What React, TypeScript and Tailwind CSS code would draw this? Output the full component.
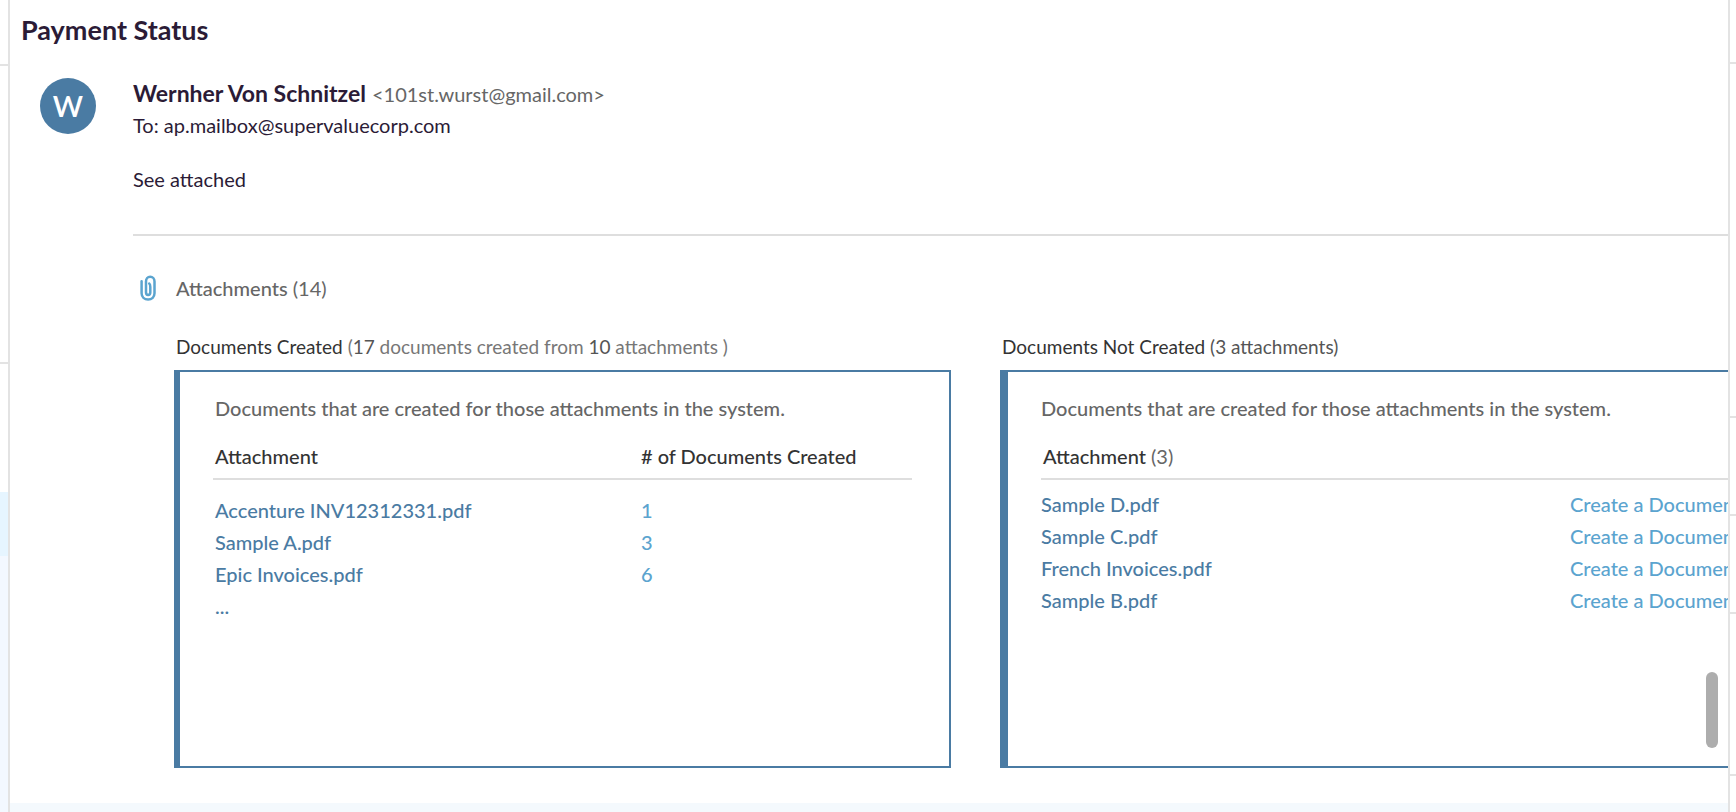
import React from "react";

const created = [
  { name: "Accenture INV12312331.pdf", count: "1" },
  { name: "Sample A.pdf", count: "3" },
  { name: "Epic Invoices.pdf", count: "6" },
  { name: "...", count: "" },
];

const notCreated = ["Sample D.pdf", "Sample C.pdf", "French Invoices.pdf", "Sample B.pdf"];

function PaperclipIcon() {
  return (
    <svg className="h-[26px] w-4 shrink-0" viewBox="0 0 16 26" fill="none" stroke="#5ba4cf" strokeLinecap="round" aria-hidden="true">
      <path
        strokeWidth="2.5"
        d="M1.6 6.2V18.2C1.6 22 4.4 24.4 8.1 24.4S14.5 22 14.5 18.2V6.4C14.5 3.6 12.7 1.7 10.2 1.7S6 3.6 6 6.4V17.2C6 19 6.8 19.9 8.1 19.9S10.3 19 10.3 17.2V12C10.3 10.4 10 9.2 9.2 8.6"
      />
    </svg>
  );
}

function LeftStrip() {
  return (
    <aside className="flex w-[10px] shrink-0 flex-col border-r-2 border-[#e3e3e3]">
      <div className="h-[66px] border-b-2 border-[#e3e3e3]" />
      <div className="h-[298px] border-b-2 border-[#e3e3e3]" />
      <div className="h-32" />
      <div className="h-16 bg-[#e6f5ff]" />
      <div className="grow bg-[#f3f8ff]" />
    </aside>
  );
}

function RightStrip() {
  return (
    <aside className="flex w-2 shrink-0 flex-col border-l-2 border-[#e3e3e3]">
      <div className="h-16 border-b-2 border-[#e3e3e3]" />
      <div className="h-[354px] border-b-2 border-[#e3e3e3]" />
      <div className="h-[98px] border-b-2 border-[#e3e3e3]" />
      <div className="h-[98px] border-b-2 border-[#e3e3e3]" />
      <div className="h-[162px] border-b-2 border-[#e3e3e3]" />
    </aside>
  );
}

export default function App() {
  return (
    <div className="flex min-h-screen overflow-hidden bg-white font-['Lato','Open_Sans',sans-serif] text-[20px] leading-8 text-[#2b1b36]">
      <LeftStrip />
      <main className="relative flex min-w-0 flex-1 flex-col overflow-hidden">
        <h1 className="pt-[14px] pl-[11px] text-[27px] leading-8 font-bold">Payment Status</h1>

        <div className="flex pt-8 pl-[30px]">
          <div className="flex size-14 shrink-0 items-center justify-center rounded-full bg-[#4a7ba3] text-[29px] font-semibold text-white">W</div>
          <div className="ml-[37px] min-w-0 flex-1">
            <header className="-mt-px">
              <p className="flex h-8 items-baseline gap-[6px] whitespace-nowrap">
                <strong className="text-[23px] leading-8 font-bold">Wernher Von Schnitzel</strong>
                <span className="text-[#666]">&lt;101st.wurst@gmail.com&gt;</span>
              </p>
              <p>To: ap.mailbox@supervaluecorp.com</p>
            </header>
            <p className="mt-[22px] border-b-2 border-[#dedede] pb-[39px]">See attached</p>

            <section>
              <h2 className="flex items-center gap-5 pt-9 pl-[7px] font-medium text-[#666]">
                <PaperclipIcon />
                <span>
                  Attachments <span className="font-normal">(14)</span>
                </span>
              </h2>

              <div className="mt-[27px] flex gap-[49px] pl-[41px]">
                <section className="w-[777px] shrink-0">
                  <h3 className="pl-[2px] text-[19px] leading-8 text-[#333]">
                    Documents Created{" "}
                    <span className="text-[#777]">
                      (<span className="text-[#555]">17</span> documents created from <span className="text-[#555]">10</span> attachments )
                    </span>
                  </h3>
                  <div className="mt-[7px] h-[398px] border-2 border-l-6 border-[#4a7ba3] pt-5 pr-[37px] pl-[33px]">
                    <p className="pl-[2px] font-medium text-[#666]">Documents that are created for those attachments in the system.</p>
                    <table className="mt-4 w-full text-left font-medium">
                      <thead className="text-[#333]">
                        <tr className="border-b-2 border-[#dedede]">
                          <th className="w-[426px] pb-[6px] pl-[2px] font-medium">Attachment</th>
                          <th className="pb-[6px] pl-[2px] font-medium"># of Documents Created</th>
                        </tr>
                      </thead>
                      <tbody className="before:block before:h-[14px]">
                        {created.map((row) => (
                          <tr key={row.name}>
                            <td className="pl-[2px]">
                              <a href="#" className="text-[#4a7ba3]">{row.name}</a>
                            </td>
                            <td className="pl-[2px]">{row.count && <a href="#" className="text-[#5ba4cf]">{row.count}</a>}</td>
                          </tr>
                        ))}
                      </tbody>
                    </table>
                  </div>
                </section>

                <section className="w-[777px] shrink-0">
                  <h3 className="pl-[2px] text-[19px] leading-8 text-[#333]">
                    Documents Not Created <span className="text-[#555]">(3 attachments)</span>
                  </h3>
                  <div className="mt-[7px] h-[398px] border-2 border-l-8 border-[#4a7ba3] pt-5 pr-[33px] pl-[33px]">
                    <p className="font-medium text-[#666]">Documents that are created for those attachments in the system.</p>
                    <table className="mt-4 w-full text-left font-medium">
                      <thead className="text-[#333]">
                        <tr className="border-b-2 border-[#dedede]">
                          <th colSpan={2} className="pb-[6px] pl-[2px] font-medium">
                            Attachment <span className="font-normal text-[#666]">(3)</span>
                          </th>
                        </tr>
                      </thead>
                      <tbody className="before:block before:h-2">
                        {notCreated.map((name) => (
                          <tr key={name}>
                            <td className="w-[529px]">
                              <a href="#" className="text-[#4a7ba3]">{name}</a>
                            </td>
                            <td className="whitespace-nowrap">
                              <a href="#" className="text-[#5ba4cf]">Create a Document</a>
                            </td>
                          </tr>
                        ))}
                      </tbody>
                    </table>
                  </div>
                </section>
              </div>
            </section>
          </div>
        </div>

        <div className="mt-[35px] min-h-[9px] grow bg-[#f4f9fd]" />
        <div className="absolute right-[10px] bottom-16 h-19 w-3 rounded-full bg-[#adadad]" />
      </main>
      <RightStrip />
    </div>
  );
}
